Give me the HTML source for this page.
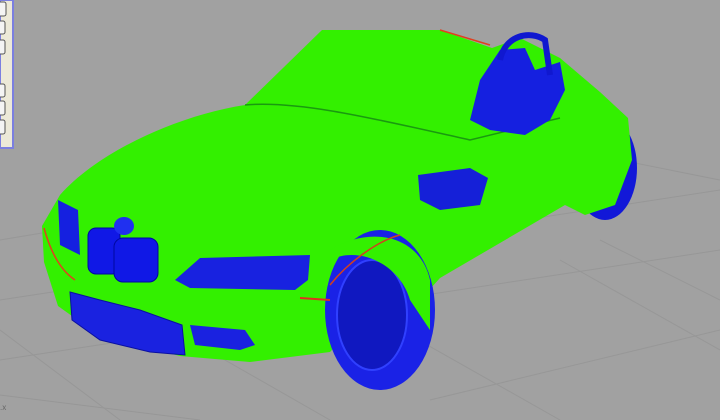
<!DOCTYPE html>
<html><head><style>
html,body{margin:0;padding:0;width:720px;height:420px;overflow:hidden;background:#a0a0a0;}
svg{display:block}
</style></head><body>
<svg width="720" height="420" viewBox="0 0 720 420" xmlns="http://www.w3.org/2000/svg">
<rect width="720" height="420" fill="#a1a1a1"/>
<g stroke="#979797" stroke-width="1" fill="none">
<path d="M0,300 L720,190"/><path d="M0,360 L720,250"/><path d="M0,240 L300,190"/>
<path d="M120,420 L0,330"/><path d="M330,420 L120,300"/><path d="M560,420 L330,290"/>
<path d="M720,350 L560,260"/><path d="M0,395 L200,420"/><path d="M430,400 L720,330"/>
<path d="M600,240 L720,300"/><path d="M620,160 L720,180"/>
</g>
<!-- left panel -->
<rect x="0" y="0" width="13" height="148" fill="#ece9d8" stroke="#7b7fe0" stroke-width="2"/>
<g fill="#f4f4f4" stroke="#555" stroke-width="1">
<rect x="-4" y="2" width="10" height="14" rx="2"/><rect x="-4" y="21" width="9" height="13" rx="2"/>
<rect x="-4" y="40" width="9" height="14" rx="2"/><rect x="-4" y="84" width="9" height="13" rx="2"/>
<rect x="-4" y="101" width="9" height="14" rx="2"/><rect x="-4" y="120" width="9" height="14" rx="2"/>
</g>
<text x="0" y="410" font-family="Liberation Sans,sans-serif" font-size="8" fill="#666">.x</text>
<!-- rear wheel -->
<ellipse cx="605" cy="168" rx="32" ry="52" fill="#1218d8"/>
<!-- body -->
<path d="M60,195 C100,150 180,115 245,105 L322,30 L440,30 L492,48 L520,38 L560,58 L600,92 L628,118 L632,160 L615,205 L585,215 L565,205 L440,278 L420,300 L350,330 L330,352 L250,362 L180,356 L100,336 L58,306 L44,262 L42,226 Z" fill="#33f000"/>
<path d="M245,105 C300,100 380,120 470,140 L560,118" stroke="#1a9a10" stroke-width="1.5" fill="none"/>
<!-- seats / roll bars -->
<path d="M480,80 L500,50 L525,48 L535,70 L560,62 L565,90 L550,120 L525,135 L490,130 L470,120 Z" fill="#1520e0"/>
<path d="M500,60 C505,35 530,30 545,40 L550,75" stroke="#1018d0" stroke-width="6" fill="none"/>
<!-- side vent -->
<path d="M418,175 L470,168 L488,178 L480,205 L440,210 L420,200 Z" fill="#1520d8"/>
<!-- front wheel -->
<ellipse cx="380" cy="310" rx="55" ry="80" fill="#1a22e6"/>
<ellipse cx="372" cy="315" rx="35" ry="55" fill="#1018c0" stroke="#3040ff" stroke-width="2"/>
<path d="M330,250 C370,225 420,235 430,280 L430,330 L410,300 C400,265 360,245 330,260 Z" fill="#33f000"/>
<!-- headlights -->
<path d="M58,200 L78,210 L80,255 L60,245 Z" fill="#1520e0"/>
<path d="M175,280 L200,258 L310,255 L308,280 L295,290 L190,288 Z" fill="#1822e0"/>
<!-- grille -->
<rect x="88" y="228" width="32" height="46" rx="8" fill="#1018e6" stroke="#0008a0"/>
<rect x="114" y="238" width="44" height="44" rx="9" fill="#1018e6" stroke="#0008a0"/>
<ellipse cx="124" cy="226" rx="10" ry="9" fill="#2030f0"/>
<!-- lower intake -->
<path d="M70,292 L100,300 L140,310 L182,325 L185,355 L150,352 L100,340 L72,320 Z" fill="#1a22e0" stroke="#0a10a0"/>
<path d="M190,325 L245,330 L255,345 L240,350 L195,345 Z" fill="#1a22e0"/>
<!-- red highlights -->
<path d="M44,228 C50,250 60,270 75,280" stroke="#e04020" stroke-width="1.5" fill="none"/>
<path d="M300,298 L330,300" stroke="#e03020" stroke-width="2"/>
<path d="M330,285 C350,260 380,240 400,235" stroke="#d04020" stroke-width="1.5" fill="none"/>
<path d="M440,30 L490,45" stroke="#e04020" stroke-width="1.5"/>
</svg>
</body></html>
